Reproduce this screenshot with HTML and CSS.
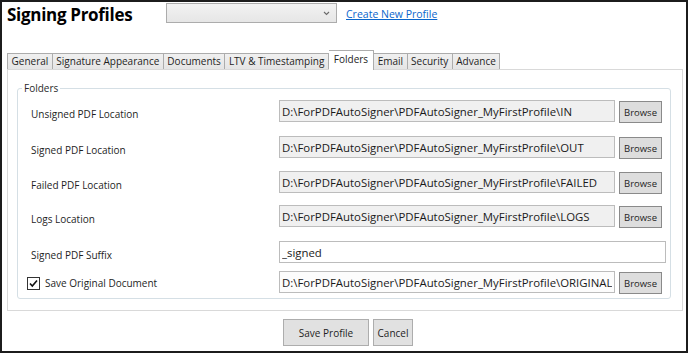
FILE: index.html
```html
<!DOCTYPE html>
<html lang="en">
<head>
    <meta charset="UTF-8">
    <title>Signing Profiles</title>
    <link rel="stylesheet" href="styles.css">
</head>
<body>
    <div class="window">
        <header class="top">
            <h1 class="title">Signing Profiles</h1>
            <div class="combo">
                <svg class="chev" width="7" height="5" viewBox="0 0 7 5"><polyline points="1,1 3.5,3.5 6,1" fill="none" stroke="#6a6a6a" stroke-width="1.1"/></svg>
            </div>
            <a class="link" href="#">Create New Profile</a>
        </header>

        <nav class="tabs">
            <span class="tab">General</span>
            <span class="tab">Signature Appearance</span>
            <span class="tab">Documents</span>
            <span class="tab">LTV &amp; Timestamping</span>
            <span class="tab active">Folders</span>
            <span class="tab">Email</span>
            <span class="tab">Security</span>
            <span class="tab">Advance</span>
        </nav>

        <section class="panel">
            <fieldset class="group">
                <legend>Folders</legend>
                <div class="form">
                    <label class="lbl">Unsigned PDF Location</label>
                    <input class="path" readonly value="D:\ForPDFAutoSigner\PDFAutoSigner_MyFirstProfile\IN">
                    <button class="browse">Browse</button>

                    <label class="lbl">Signed PDF Location</label>
                    <input class="path" readonly value="D:\ForPDFAutoSigner\PDFAutoSigner_MyFirstProfile\OUT">
                    <button class="browse">Browse</button>

                    <label class="lbl">Failed PDF Location</label>
                    <input class="path" readonly value="D:\ForPDFAutoSigner\PDFAutoSigner_MyFirstProfile\FAILED">
                    <button class="browse">Browse</button>

                    <label class="lbl">Logs Location</label>
                    <input class="path" readonly value="D:\ForPDFAutoSigner\PDFAutoSigner_MyFirstProfile\LOGS">
                    <button class="browse">Browse</button>

                    <label class="lbl">Signed PDF Suffix</label>
                    <input class="path wide" value="_signed">

                    <label class="lbl check">
                        <span class="box">
                            <svg width="11" height="11" viewBox="0 0 11 11"><polyline points="2,5.5 4.3,8 9,2.5" fill="none" stroke="#111" stroke-width="1.6"/></svg>
                        </span>
                        Save Original Document
                    </label>
                    <input class="path white" value="D:\ForPDFAutoSigner\PDFAutoSigner_MyFirstProfile\ORIGINAL">
                    <button class="browse">Browse</button>
                </div>
            </fieldset>
        </section>

        <div class="actions">
            <button class="btn save">Save Profile</button>
            <button class="btn cancel">Cancel</button>
        </div>
    </div>
</body>
</html>
```

FILE: styles.css
```css
* {
    margin: 0;
    padding: 0;
    box-sizing: border-box;
}

body {
    font-family: 'Open Sans', sans-serif;
    background: #ffffff;
    color: #1e1e1e;
}

.window {
    width: 688px;
    height: 353px;
    border: 2px solid #1c1c1c;
}

/* Header */
.top {
    display: flex;
    align-items: center;
    height: 20px;
    margin-top: 1px;
    padding-left: 5px;
}

.title {
    width: 159px;
    font-size: 17px;
    font-weight: 700;
    letter-spacing: -0.3px;
    color: #000;
    line-height: 20px;
    margin-top: 4px;
}

.combo {
    width: 171px;
    height: 20px;
    border: 1px solid #acacac;
    background: linear-gradient(#f2f2f2, #e6e6e6);
    display: flex;
    align-items: center;
    justify-content: flex-end;
    padding-right: 6px;
}

.link {
    margin-left: 9px;
    font-size: 10.5px;
    color: #0a66cc;
    text-decoration: underline;
    margin-top: 2px;
}

/* Tabs */
.tabs {
    display: flex;
    align-items: flex-end;
    height: 19px;
    margin-top: 27px;
    padding-left: 5px;
    position: relative;
    z-index: 1;
}

.tab {
    height: 16px;
    padding: 0 3.5px;
    font-size: 10px;
    line-height: 15px;
    color: #1e1e1e;
    border: 1px solid #acacac;
    border-bottom: none;
    border-left: none;
    background: linear-gradient(#f0f0f0, #e5e5e5);
}

.tab:first-child {
    border-left: 1px solid #acacac;
}

.tab.active {
    height: 20px;
    margin-bottom: -1px;
    background: #ffffff;
    line-height: 17px;
    padding: 0 5px;
}

/* Panel */
.panel {
    height: 242px;
    margin: 0 3px 0 5px;
    border: 1px solid #d9d9d9;
    padding: 11px 11px 0 9px;
}

.group {
    border: 1px solid #d5dfe5;
    border-radius: 3px;
    padding: 0 3px 5px 13px;
    height: 218px;
}

.group legend {
    margin-left: -9px;
    padding: 0 2px;
    font-size: 10px;
    line-height: 14px;
    color: #2a2a2a;
}

.form {
    display: grid;
    grid-template-columns: 248px 336px 47px;
    grid-template-rows: 36px 35px 34px 36px 30px 24px;
    align-items: start;
    margin-top: 5px;
}

.lbl {
    font-size: 10px;
    line-height: 14px;
    padding-top: 7px;
    color: #1e1e1e;
}

.lbl.check {
    display: flex;
    align-items: center;
    margin-left: -4px;
    padding-top: 5px;
}

.box {
    width: 13px;
    height: 13px;
    border: 1px solid #333;
    background: #fff;
    display: flex;
    align-items: center;
    justify-content: center;
    margin-right: 5px;
}

.path {
    width: 336px;
    height: 22px;
    border: 1px solid #bcbcbc;
    background: #f0f0f0;
    font-family: 'Open Sans', sans-serif;
    font-size: 11.4px;
    color: #1a1a1a;
    padding: 0 2px;
    outline: none;
}

.path.wide {
    grid-column: 2 / 4;
    width: 387px;
    background: #ffffff;
}

.path.white {
    background: #fcfcfc;
}

.browse {
    margin-left: 4px;
    margin-top: 1px;
    width: 43px;
    height: 22px;
    border: 1px solid #8a8a8a;
    background: #dddddd;
    font-family: 'Open Sans', sans-serif;
    font-size: 9.5px;
    color: #1e1e1e;
}

/* Bottom buttons */
.actions {
    display: flex;
    justify-content: center;
    gap: 4px;
    margin-top: 8px;
    padding-left: 8px;
}

.btn {
    height: 27px;
    border: 1px solid #adadad;
    background: #e1e1e1;
    font-family: 'Open Sans', sans-serif;
    font-size: 10px;
    color: #1e1e1e;
}

.btn.save {
    width: 86px;
}

.btn.cancel {
    width: 40px;
}
```
